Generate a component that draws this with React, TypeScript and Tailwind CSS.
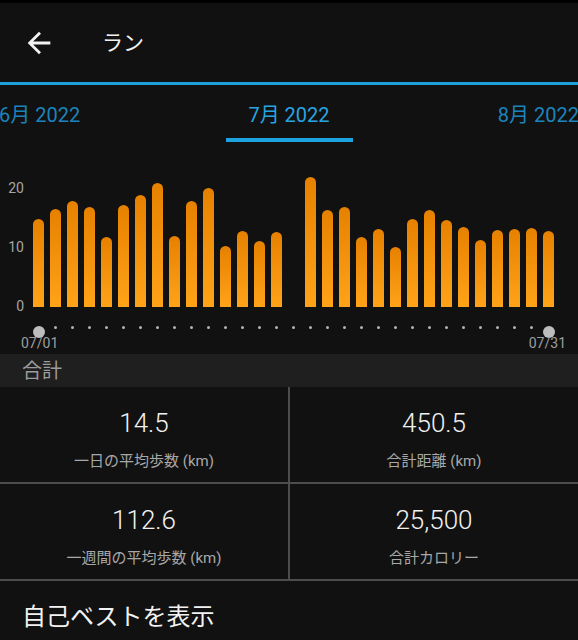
import React from 'react';

// bar heights in px above the baseline, null = no data that day
const bars: (number | null)[] = [
  88, 98, 106, 100, 70, 102, 112, 124, 71, 106, 119, 61, 76, 66, 75,
  null,
  130, 97, 100, 70, 78, 60, 88, 97, 87, 80, 67, 77, 78, 79, 76,
];

const stats = [
  { value: '14.5', label: '一日の平均歩数', unit: true, left: true },
  { value: '450.5', label: '合計距離', unit: true, left: false },
  { value: '112.6', label: '一週間の平均歩数', unit: true, left: true },
  { value: '25,500', label: '合計カロリー', unit: false, left: false },
];

const font = "font-['Roboto','Noto_Sans_CJK_JP',sans-serif]";

const App: React.FC = () => {
  return (
    <div className={`w-[578px] h-[640px] overflow-hidden bg-[#111111] text-white ${font}`}>
      <div className="h-[3px] bg-black" />

      {/* ヘッダー */}
      <header className="h-[79px] flex items-center">
        <svg className="ml-[22px] w-[34px] h-[34px]" viewBox="0 0 24 24" fill="#f2f2f2">
          <path d="M20 11H7.83l5.59-5.59L12 4l-8 8 8 8 1.41-1.41L7.83 13H20v-2z" />
        </svg>
        <span className="ml-[46px] text-[21px] leading-[28px] text-[#f2f2f2]">ラン</span>
      </header>
      <div className="h-[3px] bg-[#1d9fdc]" />

      {/* 月タブ */}
      <div className="h-[57px] flex flex-col">
        <div className="pt-[20px] grid grid-cols-3 text-[20px] leading-[20px]">
          <span className="text-left text-[#1b84bd] -ml-[1px]">6月 2022</span>
          <span className="text-center text-[#27a4e2]">7月 2022</span>
          <span className="text-right text-[#1b84bd] -mr-[1px]">8月 2022</span>
        </div>
        <div className="mt-[13px] mx-auto w-[127px] h-[4px] bg-[#1da2e0]" />
      </div>

      {/* グラフ */}
      <div className="h-[165px] flex">
        <div className="w-[33px] shrink-0 flex flex-col items-end pr-[9px] pt-[40px] gap-[46px] text-[14px] leading-[13px] text-[#a6a6a6]">
          <span>20</span>
          <span>10</span>
          <span>0</span>
        </div>
        <div className="flex items-end gap-[6px]">
          {bars.map((h, i) => (
            <div
              key={i}
              className="w-[11px] rounded-t-full bg-gradient-to-b from-[#e68100] to-[#ffa318]"
              style={{ height: h ?? 0 }}
            />
          ))}
        </div>
      </div>

      {/* スライダー */}
      <div className="h-[47px] flex flex-col">
        <div className="pl-[33px] flex gap-[6px]">
          {bars.map((_, i) => (
            <div key={i} className="w-[11px] flex justify-center">
              {i === 0 || i === bars.length - 1 ? (
                <div className="mt-[19px] w-[12px] h-[12px] shrink-0 rounded-full bg-[#bdbdbd]" />
              ) : (
                <div className="mt-[19px] w-[3px] h-[3px] rounded-full bg-[#b5b5b5]" />
              )}
            </div>
          ))}
        </div>
        <div className="-mt-[2px] pl-[21px] pr-[12px] flex justify-between text-[14px] leading-[14px] text-[#9e9e9e]">
          <span>07/01</span>
          <span>07/31</span>
        </div>
      </div>

      {/* 合計 */}
      <div className="h-[33px] bg-[#1f1f1f] flex items-center pl-[22px] text-[20px] text-[#9c9c9c]">
        合計
      </div>

      <div className="grid grid-cols-[290px_1fr]">
        {stats.map((s) => (
          <div
            key={s.label}
            className={`h-[97px] flex flex-col items-center border-b-2 border-[#4d4d4d] ${s.left ? 'border-r-2' : ''}`}
          >
            <span className="pt-[21px] text-[26px] leading-[30px] font-light text-[#f2f2f2]">{s.value}</span>
            <span className="mt-[13px] text-[15px] leading-[20px] text-[#a8a8a8]">
              {s.label}
              {s.unit && <span> (km)</span>}
            </span>
          </div>
        ))}
      </div>

      <div className="pt-[21px] pl-[22px] text-[24px] leading-[30px] text-[#f2f2f2]">自己ベストを表示</div>
    </div>
  );
};

export default App;
